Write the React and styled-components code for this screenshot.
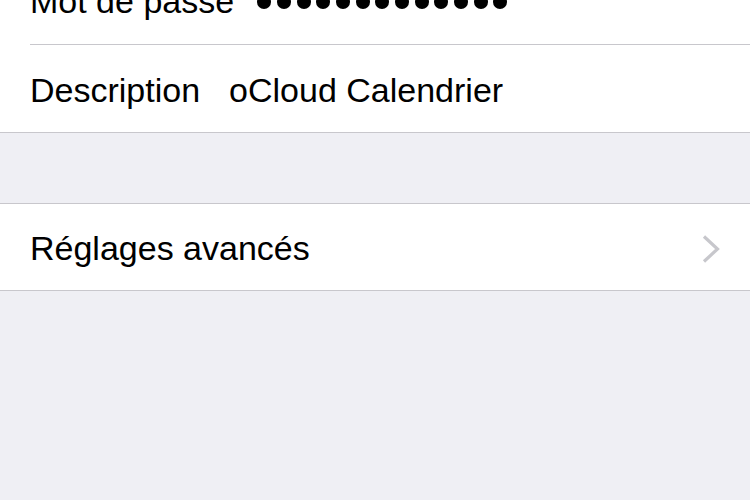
import React from "react"
import styled, { createGlobalStyle } from "styled-components"

const Global = createGlobalStyle`
html, body {
    margin: 0;
    padding: 0;
    background: #efeff4;
    font-family: "Liberation Sans", Arial, sans-serif;
    -webkit-font-smoothing: antialiased;
}
`

const Screen = styled.div`
width: 750px;
height: 500px;
overflow: hidden;
background: #efeff4;
`

const Scroll = styled.div`
margin-top: -44px;
display: flex;
flex-direction: column;
`

const Group = styled.div`
background: #fff;
border-top: ${props => props.top ? "1px solid #c8c7cc" : "none"};
border-bottom: 1px solid #c8c7cc;
margin-bottom: ${props => props.gap || 0}px;
`

const Row = styled.div`
display: flex;
align-items: center;
height: ${props => props.h || 88}px;
margin-left: 30px;
padding: 3px 30px 0 0;
border-bottom: ${props => props.last ? "none" : "1px solid #c8c7cc"};
box-sizing: border-box;
font-size: 34px;
color: #000;
`

const Label = styled.span`
flex: none;
margin-right: ${props => props.space || 24}px;
`

const Value = styled.span`
flex: 1;
display: flex;
align-items: center;
`

const Dots = styled.span`
display: flex;
gap: 5.7px;
margin-top: 1px;
`

const Dot = styled.span`
width: 14px;
height: 14px;
border-radius: 50%;
background: #000;
`

const Chevron = () => (
    <svg width="18" height="28" viewBox="0 0 18 28">
        <polyline points="2,1.5 15.5,14 2,26.5" fill="none" stroke="#c7c7cc" strokeWidth="3.2" />
    </svg>
)

export default function App() {
    return (
        <Screen>
            <Global />
            <Scroll>
                <Group gap={70}>
                    <Row h={89}>
                        <Label space={23}>Mot de passe</Label>
                        <Value>
                            <Dots>
                                {Array.from({ length: 13 }).map((_, i) => <Dot key={i} />)}
                            </Dots>
                        </Value>
                    </Row>
                    <Row last h={87}>
                        <Label space={29}>Description</Label>
                        <Value>oCloud Calendrier</Value>
                    </Row>
                </Group>
                <Group top>
                    <Row last h={86}>
                        <Label>Réglages avancés</Label>
                        <Value />
                        <Chevron />
                    </Row>
                </Group>
            </Scroll>
        </Screen>
    )
}
